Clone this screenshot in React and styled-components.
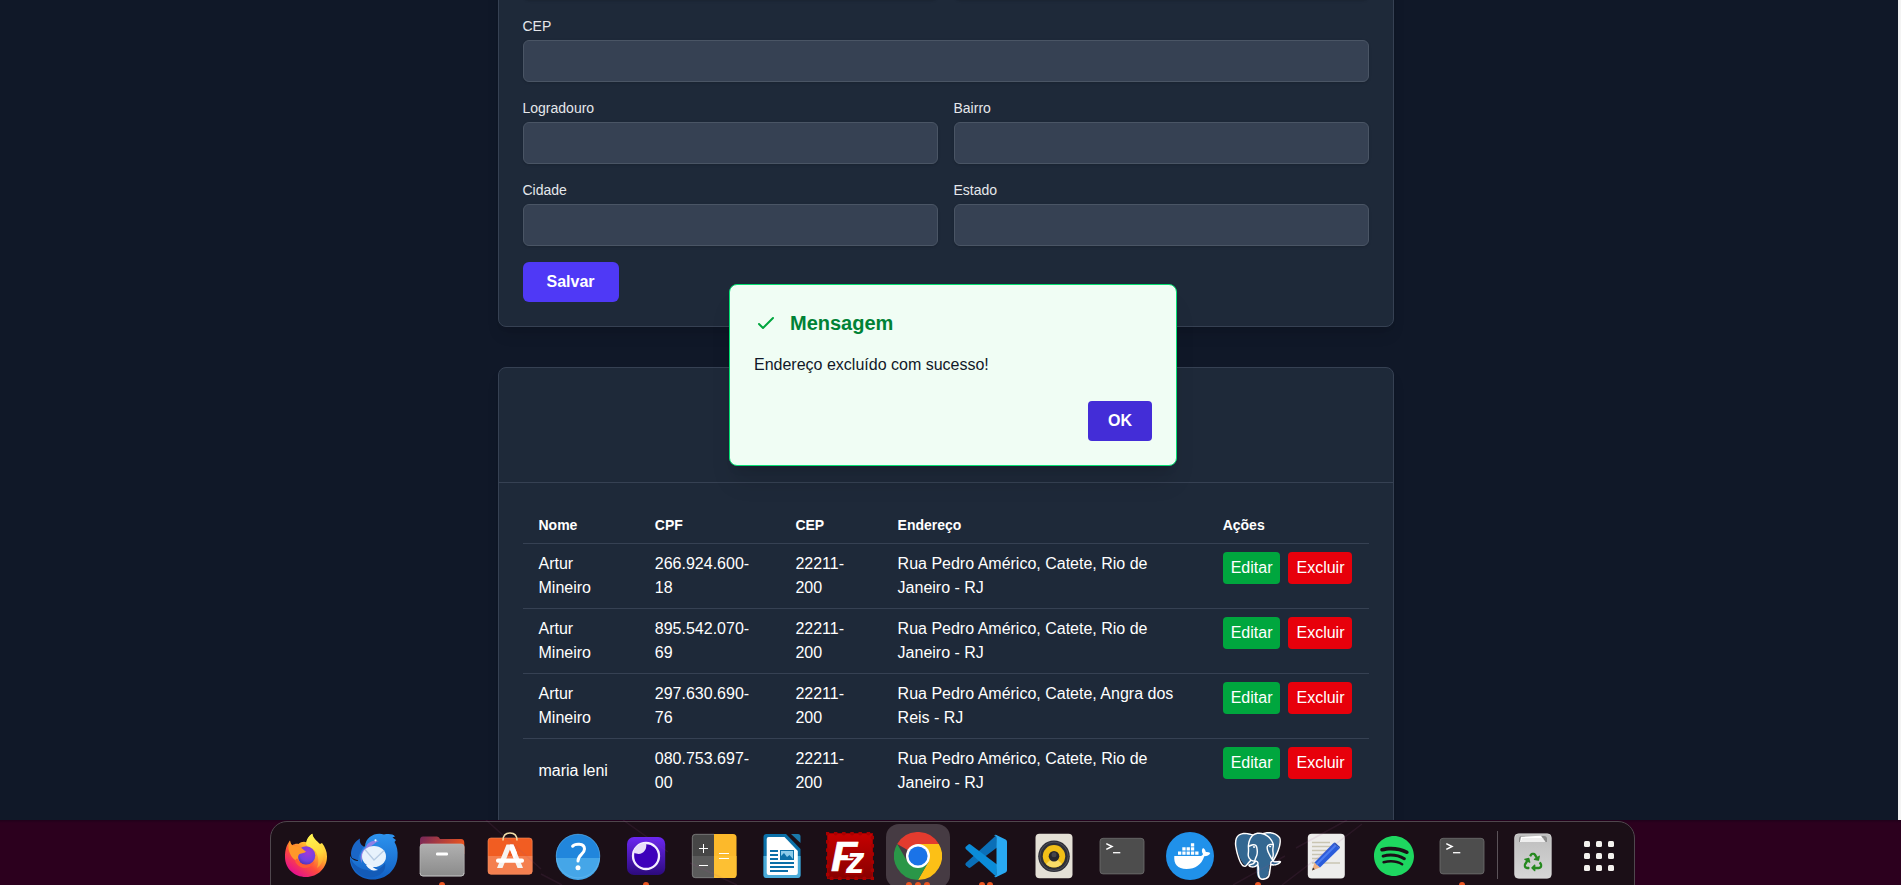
import React from "react";
import styled, { createGlobalStyle } from "styled-components";
import { SiPostgresql, SiSpotify } from "react-icons/si";
import { FaRecycle } from "react-icons/fa";

const GlobalStyle = createGlobalStyle`
  *, *::before, *::after { box-sizing: border-box; }
  html, body { margin: 0; padding: 0; overflow: hidden; }
  body {
    font-family: "Liberation Sans", Arial, sans-serif;
    font-size: 16px;
    line-height: 24px;
    color: #fff;
    background: #2c001e;
  }
  button, input { font: inherit; }
`;

const Screen = styled.div`
  display: flex;
  flex-direction: column;
  width: 1901px;
  height: 885px;
  overflow: hidden;
`;

const BrowserView = styled.div`
  position: relative;
  display: flex;
  flex: none;
  height: 820px;
  overflow: hidden;
  background: #101828;
`;

const Main = styled.main`
  display: flex;
  flex-direction: column;
  align-items: center;
  gap: 40px;
  width: 1891px;
  margin-top: -67px;
`;

const ScrollEdge = styled.div`
  width: 3px;
  margin-left: auto;
  background: #f4f4f4;
`;

const Card = styled.section`
  flex: none;
  width: 896px;
  border: 1px solid #364153;
  border-radius: 8px;
  background: #1e2939;
  box-shadow: 0 10px 15px -3px rgba(0, 0, 0, 0.1), 0 4px 6px -4px rgba(0, 0, 0, 0.1);
`;

const Form = styled.div`
  display: flex;
  flex-direction: column;
  align-items: flex-start;
  gap: 16px;
  padding: 24px;
`;

const FieldRow = styled.div`
  display: grid;
  grid-template-columns: repeat(${(p) => p.$columns || 1}, 1fr);
  gap: 16px;
  width: 100%;
`;

const Field = styled.label`
  display: flex;
  flex-direction: column;
  gap: 4px;
`;

const FieldLabel = styled.span`
  font-size: 14px;
  line-height: 20px;
  color: #e5e7eb;
`;

const Input = styled.input`
  width: 100%;
  height: 42px;
  padding: 8px 12px;
  border: 1px solid #4a5565;
  border-radius: 6px;
  background: #364153;
  color: #fff;
  outline: none;
  box-shadow: 0 1px 3px rgba(0, 0, 0, 0.1), 0 1px 2px -1px rgba(0, 0, 0, 0.1);
`;

const PrimaryButton = styled.button`
  height: 40px;
  padding: 8px ${(p) => p.$padX}px;
  border: 0;
  border-radius: ${(p) => p.$radius}px;
  background: ${(p) => p.$color};
  color: #fff;
  font-weight: 700;
  line-height: 24px;
`;

const CardHeader = styled.header`
  height: 115px;
  border-bottom: 1px solid #364153;
`;

const TableArea = styled.div`
  padding: 24px;
`;

const Table = styled.table`
  width: 100%;
  border-collapse: collapse;
  table-layout: fixed;
`;

const Col = styled.col`
  width: ${(p) => p.$width}px;
`;

const HeadRow = styled.tr`
  border-bottom: 1px solid #364153;
`;

const HeadCell = styled.th`
  padding: 8px 16px;
  text-align: left;
  font-size: 14px;
  line-height: 20px;
  font-weight: 700;
`;

const BodyRow = styled.tr`
  border-bottom: 1px solid #364153;
  &:last-child { border-bottom: 0; }
`;

const Cell = styled.td`
  padding: 8px 16px;
`;

const ActionCell = styled.td`
  padding: 8px 0 8px 16px;
  vertical-align: top;
`;

const Actions = styled.div`
  display: flex;
  gap: 8px;
`;

const ActionButton = styled.button`
  flex: none;
  height: 32px;
  padding: 4px 8px;
  border: 0;
  border-radius: 4px;
  background: ${(p) => p.$color};
  color: #fff;
  line-height: 24px;
`;

const ModalLayer = styled.div`
  position: absolute;
  top: 0;
  left: 0;
  display: flex;
  align-items: center;
  justify-content: center;
  width: 1906px;
  height: 750px;
`;

const Dialog = styled.div`
  display: flex;
  flex-direction: column;
  width: 448px;
  padding: 24px;
  border: 1px solid #05df72;
  border-radius: 8px;
  background: #f0fdf4;
  color: #101828;
  box-shadow: 0 20px 25px -5px rgba(0, 0, 0, 0.1), 0 8px 10px -6px rgba(0, 0, 0, 0.1);
`;

const DialogTitle = styled.h2`
  display: flex;
  align-items: center;
  gap: 12px;
  margin: 0 0 16px;
  font-size: 20px;
  line-height: 28px;
  font-weight: 700;
  color: #008236;
`;

const DialogText = styled.p`
  margin: 0 0 24px;
`;

const DialogFooter = styled.div`
  display: flex;
  justify-content: flex-end;
`;

const Desktop = styled.div`
  position: relative;
  display: flex;
  flex: none;
  height: 65px;
  padding: 1px 0 0 270px;
  background: linear-gradient(#20001a, #2c001e 3px);
  overflow: hidden;
`;

const WallpaperLines = styled.svg`
  position: absolute;
  top: 0;
  left: 0;
`;

const Dock = styled.nav`
  display: flex;
  width: 1365px;
  height: 80px;
  padding: 2px 0 0 1px;
  border: 1px solid #4f474d;
  border-radius: 17px;
  background: #1b0f17;
`;

const DockItem = styled.div`
  position: relative;
  display: flex;
  justify-content: center;
  align-items: center;
  flex: none;
  width: ${(p) => p.$width || 68}px;
  height: 64px;
`;

const DockTile = styled.div`
  display: flex;
  align-items: center;
  justify-content: center;
  width: 64px;
  height: 64px;
  border-radius: 13px;
  background: ${(p) => (p.$active ? "#463b43" : "transparent")};
`;

const Dots = styled.div`
  position: absolute;
  top: 58px;
  left: 0;
  right: 0;
  display: flex;
  justify-content: center;
  gap: 2.7px;
`;

const Dot = styled.span`
  width: 6px;
  height: 6px;
  border-radius: 50%;
  background: #e95420;
`;

const DockSeparator = styled.div`
  flex: none;
  width: 1px;
  height: 48px;
  margin: 7px 2px 0 1px;
  background: #5b5359;
`;

const Glyph = ({ children }) => (
  <svg width="48" height="48" viewBox="0 0 48 48" fill="none">{children}</svg>
);

const Grad = ({ id, from, to, mid, x2 = 0, y2 = 1 }) => (
  <defs>
    <linearGradient id={id} x1="0" y1="0" x2={x2} y2={y2}>
      <stop offset="0" stopColor={from} />
      {mid && <stop offset="0.5" stopColor={mid} />}
      <stop offset="1" stopColor={to} />
    </linearGradient>
  </defs>
);

const FirefoxIcon = () => (
  <Glyph>
    <defs>
      <linearGradient id="ffBody" x1="0.85" y1="0.1" x2="0.25" y2="0.95">
        <stop offset="0" stopColor="#fff44f" />
        <stop offset="0.35" stopColor="#ffb02c" />
        <stop offset="0.65" stopColor="#ff4c3b" />
        <stop offset="1" stopColor="#e5108e" />
      </linearGradient>
      <radialGradient id="ffGlobe" cx="0.6" cy="0.35" r="0.75">
        <stop offset="0" stopColor="#a238d8" />
        <stop offset="0.6" stopColor="#7141e0" />
        <stop offset="1" stopColor="#452fa8" />
      </radialGradient>
      <linearGradient id="ffTail" x1="0.4" y1="0" x2="0.6" y2="1">
        <stop offset="0" stopColor="#fff553" />
        <stop offset="0.6" stopColor="#ffd83a" />
        <stop offset="1" stopColor="#ff9c2e" />
      </linearGradient>
    </defs>
    <path d="M3 25C3 18 4.500 13 8 8.500C8.200 11 9 12.300 10.300 13.300C12 12 14.500 11.500 16.500 12C19 9.500 23 9 24.500 10.500C25 6.500 27.500 3.500 30.300 1.700C30.800 6.500 35 9 38 12L40 11C43 15 45 19.500 45 24.500C45 36 35.800 45 24 45C12.300 45 3 36.500 3 25Z" fill="url(#ffBody)" />
    <path d="M30.300 1.700C31 7 36 9.500 39 14C44 21 42 31 35 36C37 31 37 25 34 20C31 15.500 25 15 24 12C24.200 7.500 27 3.600 30.300 1.700Z" fill="url(#ffTail)" />
    <circle cx="24" cy="23.500" r="9.300" fill="url(#ffGlobe)" />
    <path d="M8 8.500C8.500 12 9.500 13 11 13.500C13 14 15 14.200 17.500 15C19.500 15.600 22 18.500 24 19.500C22 21.600 18.500 21 17 22.500C15.500 24 16 27.500 18 30C12 29 8 24 6.500 17C6.300 13.500 6.800 11 8 8.500Z" fill="#ff9829" />
    <path d="M16 27C18 33.500 27 35 32.500 29.500C30 37 19 38.500 14 31C12.500 28.500 14 26 16 27Z" fill="#ff5a35" />
  </Glyph>
);

const ThunderbirdIcon = () => (
  <Glyph>
    <Grad id="tbBody" from="#2d93ee" to="#1160c4" />
    <path d="M2 26C-1 21 3 10 10 6.500C9 11 12 14 15 15L12 30Z" fill="#1a66c7" />
    <path d="M15 14C16 5 25 0 34 2.500C39 1.700 43 2 45 4.500L42.500 5.500L46 8L44.500 10C47 14 48 19 47.500 25C46.500 38 36 47.500 23 47.500C11 47.500 1 40 0 28L0 24C2 28 6 29 8 29C9 22 11 18 15 14Z" fill="url(#tbBody)" />
    <path d="M16 15C18 9 24 8 29 9C25 10.500 23 13 19 16C14 20 11 24 12 31C9 26 11 19 16 15Z" fill="#9080e4" />
    <path d="M0 25C4 34 10 37 17 38C24 41 31 37 35 31C37 41 27 46 18 45.500C8 44 1 36 0 25Z" fill="#135bb8" />
    <ellipse cx="24" cy="24.500" rx="12" ry="10.500" fill="#e7f2fc" />
    <path d="M15 17.500L24 28L34 18.500" stroke="#b6cbe3" strokeWidth="1.300" />
    <path d="M16 33C20 39 24 39 28 38C24 36 22 35 21 33Z" fill="#f2f7fc" />
    <circle cx="25.500" cy="8.300" r="1.100" fill="#fff" />
  </Glyph>
);

const FilesIcon = () => (
  <Glyph>
    <Grad id="flBack" from="#75275b" to="#e95420" x2={1} y2={0.3} />
    <Grad id="flFront" from="#b0b0b0" to="#8b8b8b" />
    <path d="M2 8Q2 4.500 5 4.500H19Q21 4.500 22 7H43Q46.300 7 46.300 11V22H2Z" fill="url(#flBack)" />
    <rect x="2" y="12" width="44.200" height="32" rx="3" fill="url(#flFront)" stroke="#b8b8b8" strokeWidth="0.700" />
    <path d="M2 41Q2 44 5 44H43Q46 44 46 41" stroke="#d0d0d0" strokeWidth="0.600" />
    <rect x="18" y="20.500" width="12" height="3" rx="1.200" fill="#fff" />
  </Glyph>
);

const StoreIcon = () => (
  <Glyph>
    <rect x="2" y="6" width="44.200" height="36.200" rx="3" fill="#f15d22" />
    <path d="M2 24H46.200V39.200Q46.200 42.200 43.200 42.200H5Q2 42.200 2 39.200Z" fill="#f47f4f" />
    <rect x="2" y="6" width="44.200" height="36.200" rx="3" stroke="#f79063" strokeWidth="0.600" />
    <path d="M17 8.500C17 3.500 20 1 24 1S31 3.500 31 8.500" stroke="#f2dfa9" strokeWidth="1.500" />
    <path d="M20.500 12.500H27.500L37 36H31.500L24 17.500L16.500 36H11Z" fill="#f6f3f1" />
    <path d="M24 12.500H27.500L31 21L28 27L24 17.500Z" fill="#fff" />
    <rect x="10" y="26.500" width="28" height="4.200" rx="2" fill="#fff" />
  </Glyph>
);

const HelpIcon = () => (
  <Glyph>
    <circle cx="24" cy="24" r="22" fill="#2186dc" />
    <path d="M2 26A22 22 0 0 0 46 26Z" fill="#45a6e8" />
    <circle cx="24" cy="24" r="21.800" stroke="#6cbcf0" strokeWidth="0.500" />
    <path d="M18.600 14.200C20.500 11.800 30.500 10.500 30.500 17C30.500 22.500 24 22.500 24 29" stroke="#fff" strokeWidth="3" strokeLinecap="round" />
    <circle cx="24" cy="35.700" r="2.500" fill="#fff" />
  </Glyph>
);

const OrbIcon = () => (
  <Glyph>
    <Grad id="orbBg" from="#6c27f2" to="#2c0a7c" />
    <rect x="5" y="5" width="38.200" height="38" rx="7" fill="url(#orbBg)" />
    <circle cx="24" cy="24" r="13" fill="#3d00bb" stroke="#f4efff" strokeWidth="2.300" />
    <path d="M12 18C14 13.500 19 10.500 24 11.300C26 18 19 25 12 20.500Z" fill="#e8dff8" />
  </Glyph>
);

const CalculatorIcon = () => (
  <Glyph>
    <path d="M24 2H5.500Q2 2 2 5.500V24H24Z" fill="#464646" />
    <path d="M2 24H24V46H5.500Q2 46 2 42.500Z" fill="#5b5b5b" />
    <path d="M24 2H43Q46.500 2 46.500 5.500V42.500Q46.500 46 43 46H24Z" fill="#fcb92b" />
    <path d="M24 24H46.500V42.500Q46.500 46 43 46H24Z" fill="#fdc033" />
    <path d="M24 2.300H5.500Q2.300 2.300 2.300 5.500V42.500Q2.300 45.700 5.500 45.700H24" stroke="#8a8a8a" strokeWidth="0.700" />
    <path d="M9 16.500H18M13.500 12V21M9 33.500H18M29 21.500H39M29 26.500H39" stroke="#fff" strokeWidth="1" />
  </Glyph>
);

const WriterIcon = () => (
  <Glyph>
    <path d="M5.500 5Q5.500 2 8.500 2H28L42.500 17V43Q42.500 46 39.500 46H8.500Q5.500 46 5.500 43Z" fill="#0b70a8" />
    <path d="M5.500 24H42.500V43Q42.500 46 39.500 46H8.500Q5.500 46 5.500 43Z" fill="#4aabd8" />
    <path d="M8.700 7Q8.700 5 10.700 5H26.500L39.800 19V41Q39.800 43 37.800 43H10.700Q8.700 43 8.700 41Z" fill="#fff" />
    <path d="M33 2H40Q42.500 2 42.500 4.500V11Z" fill="#1b79aa" />
    <path d="M12 19H20M12 23H20M12 27H20M12 31H36M12 35H36M12 39H30" stroke="#0b6fa8" strokeWidth="2" />
    <rect x="22.500" y="18.500" width="13" height="9" fill="#8ccbea" stroke="#0b6fa8" />
    <path d="M23 27V24L26 21L29 25L31.500 23L35 27Z" fill="#0b6fa8" />
  </Glyph>
);

const FileZillaIcon = () => (
  <Glyph>
    <Grad id="fzBg" from="#c60000" to="#880000" />
    <rect x="1.500" y="1.500" width="45" height="45" fill="url(#fzBg)" stroke="#9c0000" />
    <rect x="1.500" y="1.500" width="45" height="45" stroke="#a80000" strokeWidth="4" strokeLinecap="round" strokeDasharray="0 8.180" />
    <text fontFamily="Liberation Sans, sans-serif" fontWeight="700" fontStyle="italic" fill="#fff" style={{ paintOrder: "stroke" }}>
      <tspan x="5" y="38.500" fontSize="43" stroke="#fff" strokeWidth="0.600">F</tspan>
      <tspan x="20" y="40.700" fontSize="37" stroke="#a60000" strokeWidth="3">z</tspan>
    </text>
  </Glyph>
);

const ChromeIcon = () => (
  <Glyph>
    <path d="M24 24L3.200 12A24 24 0 0 1 44.800 12Z" fill="#e33b2e" />
    <path d="M24 24V12H44.800A24 24 0 0 1 24 48L34.400 30Z" fill="#fcc016" />
    <path d="M24 24L34.400 30L24 48A24 24 0 0 1 3.200 12L13.600 30Z" fill="#2a9748" />
    <circle cx="24" cy="24" r="12" fill="#fff" />
    <circle cx="24" cy="24" r="9.600" fill="#1a73e8" />
  </Glyph>
);

const VSCodeIcon = () => (
  <Glyph>
    <path d="M34.500 3L3.800 31Q2.700 32.200 3.800 33.300L6.300 35.600Q7.400 36.400 8.500 35.600L35 15.500Z" fill="#0a6fb8" />
    <path d="M34.500 45L3.800 17Q2.700 15.800 3.800 14.700L6.300 12.400Q7.400 11.600 8.500 12.400L35 32.500Z" fill="#0b8cd8" />
    <path d="M34.300 2.900L43.600 7.400Q45 8.200 45 9.700V38.300Q45 39.800 43.600 40.600L34.300 45.100Q32.800 45.400 31.800 44.300Q34.500 45 34.500 42V6Q34.500 3 31.800 3.700Q32.800 2.600 34.300 2.900Z" fill="#29a9f2" />
  </Glyph>
);

const SpeakerIcon = () => (
  <Glyph>
    <rect x="5.500" y="1.700" width="37" height="44.500" rx="4" fill="#e4e0d6" />
    <circle cx="24" cy="24.300" r="15.800" fill="#2e2f37" />
    <circle cx="24" cy="24.300" r="14.200" stroke="#51525c" strokeWidth="0.900" />
    <circle cx="24" cy="24.300" r="11.200" fill="#f1bf18" />
    <path d="M24 24.300L16 32A11.200 11.200 0 0 0 32 32Z" fill="#f9dc68" />
    <circle cx="24" cy="24.300" r="5.300" fill="#27272d" />
    <circle cx="24" cy="22.800" r="2.500" fill="#45454b" />
  </Glyph>
);

const TerminalIcon = () => (
  <Glyph>
    <rect x="2" y="6.300" width="44" height="35.600" rx="3" fill="#4d4d4d" stroke="#6e6e6e" strokeWidth="0.800" />
    <path d="M8.300 11.700L14 14.500L8.300 17.300" stroke="#fff" strokeWidth="1.500" />
    <path d="M15 20.700H22.300" stroke="#fff" strokeWidth="1.300" />
  </Glyph>
);

const DockerIcon = () => (
  <Glyph>
    <circle cx="24" cy="24" r="24" fill="#2091ea" />
    <path d="M8.300 24H34C35.500 24 36.500 23.500 37 22C35.500 20 35.500 17.500 37 16C38.800 17 39.600 18.500 39.800 20C41.500 19.800 43 20.200 44.300 21C43.300 23.200 41 24.200 38.300 24.300C35.300 33 29.500 37 20.500 37C11.500 37 7.600 32 8.300 24Z" fill="#fff" />
    <path d="M12 19.500H15.300V22.800H12ZM16.300 19.500H19.600V22.800H16.300ZM20.600 19.500H23.900V22.800H20.600ZM24.900 19.500H28.200V22.800H24.900ZM29.200 19.500H32.500V22.800H29.200ZM16.300 15.300H19.600V18.600H16.300ZM20.600 15.300H23.900V18.600H20.600ZM24.900 15.300H28.200V18.600H24.900ZM24.900 11.300H28.200V14.500H24.900Z" fill="#fff" />
  </Glyph>
);

const PostgresIcon = () => (
  <Glyph>
    <path d="M9 2C15 0 17 2 19 2.500C22 1 26 0.500 29 1.800C35 0 42 1 45 6C46.500 11 43 20 39.500 28C42 29.500 45 28.500 46 29.300C44.500 32.500 40 34 35.500 33L34.500 41C34 46 29 47.500 26 46.500C23 46 22.500 42 22.500 34C19 35.500 16 35 14 33C10.500 34.500 8 31 5.500 25C2.500 17 0.500 10 2.800 5.500C4 3 6.500 2 9 2Z" fill="#336791" />
    <SiPostgresql size={48} color="#fff" />
  </Glyph>
);

const EditorIcon = () => (
  <Glyph>
    <rect x="5.800" y="1.700" width="37" height="44.800" rx="4" fill="#ededec" />
    <path d="M10 10.500H28M10 14.500H32M10 18.500H28M10 22.500H24M10 26.500H20M10 31H38" stroke="#c9c5b2" strokeWidth="1.500" />
    <path d="M10 38.500L12.500 30.500L18 35.500Z" fill="#f0b183" />
    <path d="M10 38.500L11 35.500L12.800 37.300Z" fill="#333" />
    <path d="M12.500 30.500L31.500 11L37.500 16.500L18 35.500Z" fill="#2a5cdb" />
    <path d="M14.500 32.500L34 13" stroke="#4c7df0" strokeWidth="2" />
    <path d="M31.500 11L33 10.500L38 15L37.500 16.500Z" fill="#2149b8" />
  </Glyph>
);

const SpotifyIcon = () => <SiSpotify size={40} color="#1ed760" />;

const TrashIcon = () => (
  <Glyph>
    <Grad id="trBody" from="#bdbdbd" to="#d6d6d6" />
    <rect x="5.600" y="1.800" width="36.700" height="44.500" rx="4" fill="url(#trBody)" stroke="#e0e0e0" strokeWidth="0.600" />
    <path d="M10 10V7Q10 4 13 4H35Q38 4 38 7V10Z" fill="#8b8b8b" />
    <path d="M12 4.700L32 3.700L36.500 10H11Z" fill="#fff" />
    <path d="M13 7H35M12 9H36" stroke="#cfcfcf" strokeWidth="0.700" />
    <g transform="translate(14.500 20.500)">
      <FaRecycle size={19} color="#26891f" />
    </g>
  </Glyph>
);

const AppGridIcon = () => (
  <Glyph>
    {[9, 21, 33].map((y) =>
      [9, 21, 33].map((x) => (
        <rect key={`${x}-${y}`} x={x} y={y} width="6" height="6" rx="1.500" fill="#f4f1ee" />
      ))
    )}
  </Glyph>
);

const dockApps = [
  { name: "firefox", Icon: FirefoxIcon },
  { name: "thunderbird", Icon: ThunderbirdIcon },
  { name: "files", Icon: FilesIcon, windows: 1 },
  { name: "store", Icon: StoreIcon },
  { name: "help", Icon: HelpIcon },
  { name: "orb", Icon: OrbIcon, windows: 1 },
  { name: "calculator", Icon: CalculatorIcon },
  { name: "writer", Icon: WriterIcon },
  { name: "filezilla", Icon: FileZillaIcon },
  { name: "chrome", Icon: ChromeIcon, windows: 3, active: true },
  { name: "vscode", Icon: VSCodeIcon, windows: 2 },
  { name: "speaker", Icon: SpeakerIcon },
  { name: "terminal", Icon: TerminalIcon },
  { name: "docker", Icon: DockerIcon },
  { name: "postgres", Icon: PostgresIcon, windows: 1 },
  { name: "editor", Icon: EditorIcon },
  { name: "spotify", Icon: SpotifyIcon },
  { name: "console", Icon: TerminalIcon, windows: 1 },
];

const rows = [
  { nome: "Artur Mineiro", cpf: "266.924.600-18", cep: "22211-200", endereco: "Rua Pedro Américo, Catete, Rio de Janeiro - RJ" },
  { nome: "Artur Mineiro", cpf: "895.542.070-69", cep: "22211-200", endereco: "Rua Pedro Américo, Catete, Rio de Janeiro - RJ" },
  { nome: "Artur Mineiro", cpf: "297.630.690-76", cep: "22211-200", endereco: "Rua Pedro Américo, Catete, Angra dos Reis - RJ" },
  { nome: "maria leni", cpf: "080.753.697-00", cep: "22211-200", endereco: "Rua Pedro Américo, Catete, Rio de Janeiro - RJ" },
];

const LabeledInput = ({ label }) => (
  <Field>
    <FieldLabel>{label}</FieldLabel>
    <Input />
  </Field>
);

const DockApp = ({ Icon, windows = 0, active, width }) => (
  <DockItem $width={width}>
    <DockTile $active={active}>
      <Icon />
    </DockTile>
    {windows > 0 && (
      <Dots>
        {Array.from({ length: windows }, (_, i) => (
          <Dot key={i} />
        ))}
      </Dots>
    )}
  </DockItem>
);

export default function App() {
  return (
    <>
      <GlobalStyle />
      <Screen>
        <BrowserView>
          <Main>
            <Card>
              <Form>
                <FieldRow $columns={2}>
                  <Input />
                  <Input />
                </FieldRow>
                <FieldRow>
                  <LabeledInput label="CEP" />
                </FieldRow>
                <FieldRow $columns={2}>
                  <LabeledInput label="Logradouro" />
                  <LabeledInput label="Bairro" />
                </FieldRow>
                <FieldRow $columns={2}>
                  <LabeledInput label="Cidade" />
                  <LabeledInput label="Estado" />
                </FieldRow>
                <PrimaryButton $color="#4f39f6" $radius={6} $padX={24}>Salvar</PrimaryButton>
              </Form>
            </Card>
            <Card>
              <CardHeader />
              <TableArea>
                <Table>
                  <colgroup>
                    <Col $width={116.3} />
                    <Col $width={140.6} />
                    <Col $width={102.2} />
                    <Col $width={325.1} />
                    <Col $width={161.8} />
                  </colgroup>
                  <thead>
                    <HeadRow>
                      <HeadCell>Nome</HeadCell>
                      <HeadCell>CPF</HeadCell>
                      <HeadCell>CEP</HeadCell>
                      <HeadCell>Endereço</HeadCell>
                      <HeadCell>Ações</HeadCell>
                    </HeadRow>
                  </thead>
                  <tbody>
                    {rows.map((row) => (
                      <BodyRow key={row.cpf}>
                        <Cell>{row.nome}</Cell>
                        <Cell>{row.cpf}</Cell>
                        <Cell>{row.cep}</Cell>
                        <Cell>{row.endereco}</Cell>
                        <ActionCell>
                          <Actions>
                            <ActionButton $color="#00a63e">Editar</ActionButton>
                            <ActionButton $color="#e7000b">Excluir</ActionButton>
                          </Actions>
                        </ActionCell>
                      </BodyRow>
                    ))}
                  </tbody>
                </Table>
              </TableArea>
            </Card>
          </Main>
          <ScrollEdge />
          <ModalLayer>
            <Dialog role="dialog">
              <DialogTitle>
                <svg width="24" height="24" viewBox="0 0 24 24" fill="none" stroke="#00a63e" strokeWidth="2" strokeLinecap="round" strokeLinejoin="round">
                  <path d="M5 13l4 4L19 7" />
                </svg>
                Mensagem
              </DialogTitle>
              <DialogText>Endereço excluído com sucesso!</DialogText>
              <DialogFooter>
                <PrimaryButton $color="#432dd7" $radius={4} $padX={20}>OK</PrimaryButton>
              </DialogFooter>
            </Dialog>
          </ModalLayer>
        </BrowserView>
        <Desktop>
          <Dock>
            {dockApps.map((app) => (
              <DockApp key={app.name} {...app} />
            ))}
            <DockSeparator />
            <DockApp Icon={TrashIcon} width={66} />
            <DockApp Icon={AppGridIcon} width={66} />
          </Dock>
          <WallpaperLines width="1901" height="65" viewBox="0 0 1901 65" fill="none" stroke="#a0508c" strokeOpacity="0.12" strokeWidth="1.500">
            <path d="M486 0L541 49M541 54L562 65M623 0L668 32M690 43L737 65M1347 0L1296 28M1285 36L1233 65M1362 4L1282 65" />
          </WallpaperLines>
        </Desktop>
      </Screen>
    </>
  );
}
